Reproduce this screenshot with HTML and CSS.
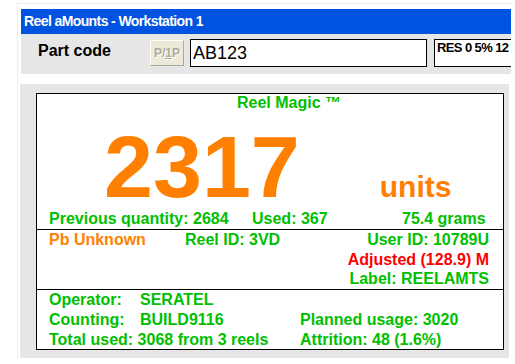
FILE: index.html
```html
<!DOCTYPE html>
<html>
<head>
    <title>Reel aMounts - Workstation 1</title>
    <link rel="stylesheet" href="styles.css">
</head>
<body>
    <div class="frame">
        <div class="titlebar">Reel aMounts - Workstation 1</div>

        <div class="header">
            <span class="label">Part code</span>
            <button class="btn-pp" disabled>P/<u>1</u>P</button>
            <input class="part-input" type="text" value="AB123">
            <div class="res-box">RES 0 5% 12</div>
        </div>

        <div class="panel">
            <div class="reel-box">
                <div class="section top">
                    <div class="brand">Reel Magic ™</div>
                    <div class="big">
                        <span class="count">2317</span>
                        <span class="units">units</span>
                    </div>
                    <div class="stats">
                        <span>Previous quantity: 2684</span>
                        <span>Used: 367</span>
                        <span>75.4 grams</span>
                    </div>
                </div>

                <div class="section ids">
                    <span class="orange">Pb Unknown</span>
                    <span>Reel ID: 3VD</span>
                    <div class="right">
                        <div>User ID: 10789U</div>
                        <div class="red">Adjusted (128.9) M</div>
                        <div>Label: REELAMTS</div>
                    </div>
                </div>

                <div class="section usage">
                    <span>Operator:</span>
                    <span>SERATEL</span>
                    <span></span>
                    <span>Counting:</span>
                    <span>BUILD9116</span>
                    <span>Planned usage: 3020</span>
                    <span class="span2">Total used: 3068 from 3 reels</span>
                    <span>Attrition: 48 (1.6%)</span>
                </div>
            </div>
        </div>
    </div>
</body>
</html>
```

FILE: styles.css
```css
body {
    margin: 0;
    background: #fff;
    font-family: "Liberation Sans", Arial, sans-serif;
}
.frame {
    margin: 3px 2px 0 17px;
    border-top: 1px solid #efece6;
    border-left: 1px solid #efece6;
    padding: 5px 2px 0 3px;
    height: 355px;
    box-sizing: border-box;
}
.titlebar {
    height: 25px;
    line-height: 25px;
    background: #0052e0;
    color: #fff;
    font-size: 14px;
    font-weight: bold;
    letter-spacing: -0.6px;
    padding-left: 3px;
}
.header {
    display: flex;
    align-items: flex-start;
    height: 40px;
    padding: 5px 0 0 17px;
    box-sizing: border-box;
    background: #e6e6e6;
    overflow: hidden;
}
.label {
    width: 112px;
    font-size: 16px;
    font-weight: bold;
    line-height: 24px;
    color: #000;
}
.btn-pp {
    width: 34px;
    height: 26px;
    margin-top: 1px;
    padding: 0;
    background: #ece9d8;
    border: 1px solid;
    border-color: #fff #aca899 #aca899 #fff;
    color: #aca899;
    text-shadow: 1px 1px 0 #fff;
    font-family: "Liberation Sans", Arial, sans-serif;
    font-size: 12px;
    font-weight: bold;
}
.part-input {
    width: 237px;
    height: 28px;
    margin-left: 6px;
    padding: 0 2px;
    box-sizing: border-box;
    border: 1px solid #000;
    background: #fff;
    font-family: "Liberation Sans", Arial, sans-serif;
    font-size: 18px;
    color: #000;
}
.res-box {
    flex: 1;
    height: 28px;
    margin-left: 7px;
    padding: 0 2px;
    box-sizing: border-box;
    border: 1px solid #000;
    border-right: none;
    background: #fff;
    font-size: 13px;
    font-weight: bold;
    letter-spacing: -0.6px;
    white-space: nowrap;
    overflow: hidden;
}
.panel {
    margin: 10px 2px 0 -1px;
    padding: 9px 5px 8px 16px;
    background: #e6e6e6;
}
.reel-box {
    background: #fff;
    border: 1px solid #000;
    color: #00c000;
    font-size: 16px;
    font-weight: bold;
}
.section {
    padding: 0 14px 0 12px;
}
.section + .section {
    border-top: 1px solid #000;
}
.brand {
    line-height: 18px;
    padding-left: 188px;
}
.big {
    display: flex;
    align-items: baseline;
    margin-top: 13px;
    padding-left: 55px;
    color: #ff8000;
}
.count {
    font-size: 88px;
    line-height: 84px;
}
.units {
    font-size: 30px;
    margin-left: 80px;
}
.stats {
    display: grid;
    grid-template-columns: 203px 150px 1fr;
    line-height: 20px;
}
.ids {
    display: grid;
    grid-template-columns: 136px auto 1fr;
    align-items: start;
    line-height: 19.7px;
}
.right {
    text-align: right;
}
.orange { color: #ff8000; }
.red { color: #ff0000; }
.usage {
    display: grid;
    grid-template-columns: 91px 160px 1fr;
    line-height: 19.7px;
}
.span2 {
    grid-column: span 2;
}
```
